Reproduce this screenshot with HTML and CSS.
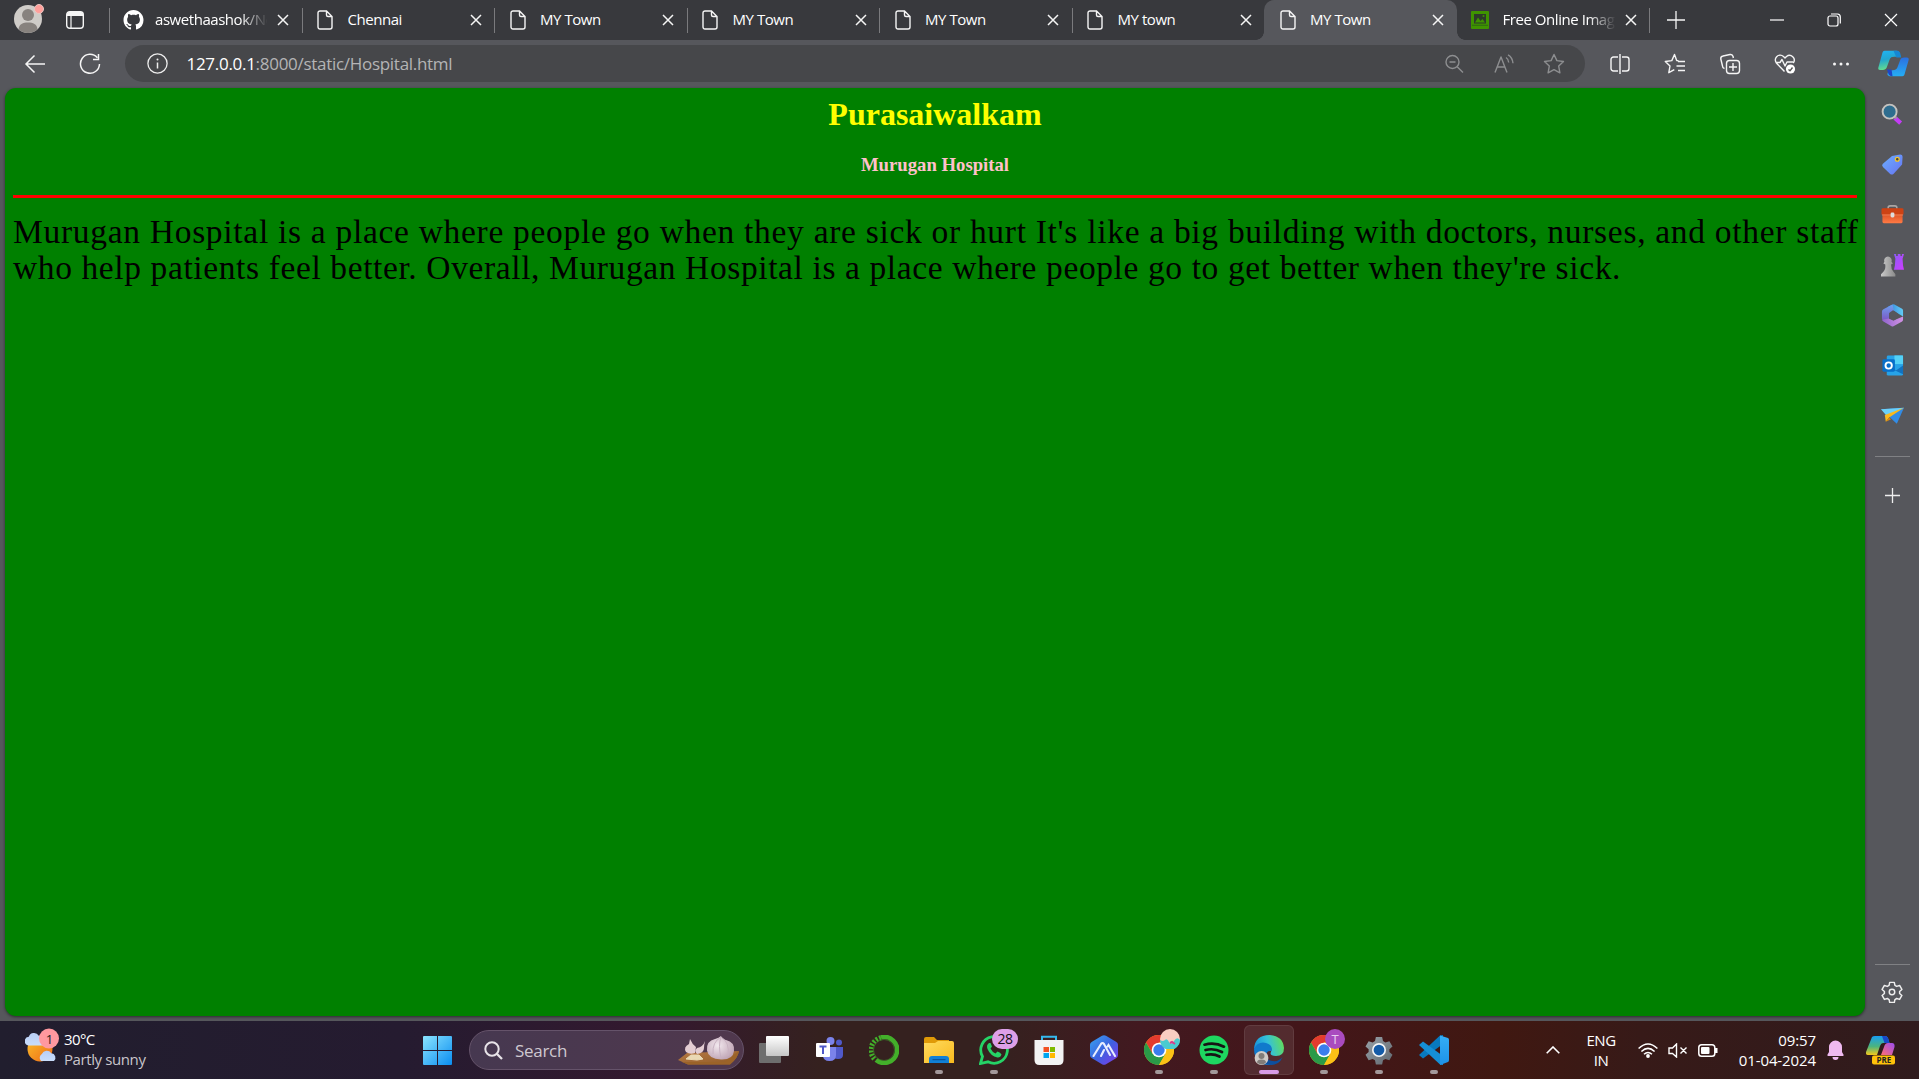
FILE: index.html
```html
<!DOCTYPE html>
<html lang="en">
<head>
<meta charset="utf-8">
<title>MY Town</title>
<link rel="stylesheet" href="styles.css">
</head>
<body>
<svg class="defs" width="0" height="0" aria-hidden="true">
  <defs>
    <linearGradient id="gWin" x1="0" y1="0" x2="1" y2="1"><stop offset="0" stop-color="#8be4ff"/><stop offset="1" stop-color="#0a8df0"/></linearGradient>
    <linearGradient id="gCop1" x1="0" y1="0" x2="0.2" y2="1"><stop offset="0" stop-color="#1fb4f5"/><stop offset=".5" stop-color="#22a6cf"/><stop offset="1" stop-color="#63dc8f"/></linearGradient>
    <linearGradient id="gCop2" x1="0" y1="0" x2="0" y2="1"><stop offset="0" stop-color="#2c6fe0"/><stop offset="1" stop-color="#25aef5"/></linearGradient>
    <linearGradient id="gPre1" x1="0" y1="0" x2="0" y2="1"><stop offset="0" stop-color="#189ef2"/><stop offset=".55" stop-color="#4bb47e"/><stop offset="1" stop-color="#f4c81c"/></linearGradient>
    <linearGradient id="gPre2" x1="1" y1="0" x2="0" y2="1"><stop offset="0" stop-color="#9b4cf0"/><stop offset="1" stop-color="#ff6f74"/></linearGradient>
    <linearGradient id="gTag" x1="0" y1="0" x2="1" y2="1"><stop offset="0" stop-color="#6cb1ff"/><stop offset="1" stop-color="#6672f2"/></linearGradient>
    <linearGradient id="gBox" x1="0" y1="0" x2="0" y2="1"><stop offset="0" stop-color="#c83b12"/><stop offset="1" stop-color="#ff7a45"/></linearGradient>
    <linearGradient id="gPawn" x1="0" y1="0" x2="1" y2="0"><stop offset="0" stop-color="#c9c9c9"/><stop offset="1" stop-color="#8b8b8b"/></linearGradient>
    <linearGradient id="gRook" x1="0" y1="0" x2="1" y2="1"><stop offset="0" stop-color="#8a5cf6"/><stop offset="1" stop-color="#d03cff"/></linearGradient>
    <linearGradient id="gFold" x1="0" y1="0" x2="1" y2="1"><stop offset="0" stop-color="#ffdb5e"/><stop offset="1" stop-color="#f9b91e"/></linearGradient>
    <linearGradient id="gArc" x1="0" y1="0" x2="1" y2="1"><stop offset="0" stop-color="#38a5f0"/><stop offset=".5" stop-color="#3d62e0"/><stop offset="1" stop-color="#8238e8"/></linearGradient>
    <linearGradient id="gEdge" x1="0" y1=".6" x2="1" y2=".4"><stop offset="0" stop-color="#1690dc"/><stop offset=".5" stop-color="#35c1d8"/><stop offset="1" stop-color="#63dd5a"/></linearGradient>
    <linearGradient id="gSun" x1="0" y1="0" x2="1" y2="1"><stop offset="0" stop-color="#fbc02a"/><stop offset="1" stop-color="#ee6a16"/></linearGradient>
    <linearGradient id="gCloud" x1="0" y1="0" x2="0" y2="1"><stop offset="0" stop-color="#b8cef5"/><stop offset="1" stop-color="#c9ddfb"/></linearGradient>
    <linearGradient id="gGear" x1="0" y1="0" x2="1" y2="1"><stop offset="0" stop-color="#9aa3aa"/><stop offset="1" stop-color="#5f676e"/></linearGradient>
    <radialGradient id="gBulb" cx=".4" cy=".4" r=".7"><stop offset="0" stop-color="#f2e8ee"/><stop offset="1" stop-color="#bb9fb0"/></radialGradient>
    <linearGradient id="gBoard" x1="0" y1="0" x2="1" y2="1"><stop offset="0" stop-color="#b87b46"/><stop offset="1" stop-color="#8f5a24"/></linearGradient>
    <linearGradient id="gPane" x1="0" y1="0" x2="0" y2="1"><stop offset="0" stop-color="#ffffff"/><stop offset="1" stop-color="#c6c6c6"/></linearGradient>
    <linearGradient id="gVs" x1="0" y1="0" x2="0" y2="1"><stop offset="0" stop-color="#35adf5"/><stop offset="1" stop-color="#1d92e8"/></linearGradient>
    <linearGradient id="gM1" x1="0" y1="0" x2="1" y2="0"><stop offset="0" stop-color="#2f7fd8"/><stop offset="1" stop-color="#62cdf6"/></linearGradient>
    <linearGradient id="gM2" x1="0" y1="0" x2="0" y2="1"><stop offset="0" stop-color="#6da1ef"/><stop offset="1" stop-color="#7d4fc0"/></linearGradient>
    <linearGradient id="gM3" x1="0" y1="0" x2="1" y2="0"><stop offset="0" stop-color="#8e63cc"/><stop offset="1" stop-color="#d292e4"/></linearGradient>

    <symbol id="file" viewBox="0 0 16 20"><path d="M3 1h6.500L15 6.500V17a2 2 0 0 1-2 2H3a2 2 0 0 1-2-2V3a2 2 0 0 1 2-2zM9.500 1v4a1.500 1.500 0 0 0 1.500 1.500h4" fill="none" stroke="#f5f5f5" stroke-width="1.400"/></symbol>
    <symbol id="close" viewBox="0 0 12 12"><path d="M1 1l10 10M11 1L1 11" fill="none" stroke="#f5f5f5" stroke-width="1.500"/></symbol>
    <symbol id="chrome" viewBox="0 0 30 30">
      <circle cx="15" cy="15" r="15" fill="#fbc116"/>
      <path d="M2 7.500A15 15 0 0 1 28 7.500H15L8.500 18.700z" fill="#e33b2e"/>
      <path d="M2 7.500A15 15 0 0 0 15 30L21.500 18.750H8.500z" fill="#2a9a48"/>
      <path d="M28 7.500H15v7.500l6.500 3.750L15 30A15 15 0 0 0 28 7.500z" fill="#fbc116"/>
      <circle cx="15" cy="15" r="7.300" fill="#fff"/><circle cx="15" cy="15" r="5.700" fill="#3b7ded"/>
    </symbol>
    <symbol id="cog" viewBox="0 0 24 24"><path d="M9.500 1.500h5l.7 3.300 1.900 1.100 3.200-1 2.500 4.300-2.500 2.200v2.200l2.500 2.200-2.500 4.300-3.200-1-1.900 1.100-.7 3.300h-5l-.7-3.300-1.900-1.100-3.200 1-2.500-4.300 2.500-2.200v-2.200L1.200 9.200l2.500-4.300 3.200 1 1.900-1.100z"/></symbol>
  </defs>
</svg>

<header class="tabstrip">
  <div class="profile">
    <svg width="30" height="30" viewBox="0 0 30 30"><circle cx="14" cy="15" r="14" fill="#cfccc8"/><circle cx="14" cy="11" r="6" fill="#87827e"/><path d="M4.500 25.300C5 20 9 18.500 14 18.500s9 1.500 9.500 6.800A14 14 0 0 1 4.500 25.300z" fill="#87827e"/><circle cx="25" cy="5" r="4.500" fill="#ff9f9b" stroke="#e8c8c4" stroke-width="1"/></svg>
    <svg width="18" height="18" viewBox="0 0 18 18"><rect x=".7" y=".7" width="16.600" height="16.600" rx="3" fill="none" stroke="#f5f5f5" stroke-width="1.400"/><path d="M1 5V3a2 2 0 0 1 2-2h12a2 2 0 0 1 2 2v2z" fill="#f5f5f5"/><path d="M5 5v12" stroke="#f5f5f5" stroke-width="1.200"/></svg>
  </div>
  <div class="tab sep">
    <svg class="github" width="21" height="20" viewBox="0 0 16 16"><path fill="#fff" d="M8 0C3.580 0 0 3.580 0 8c0 3.540 2.290 6.530 5.470 7.590.4.070.55-.17.55-.38 0-.19-.01-.82-.01-1.490-2.010.37-2.530-.49-2.690-.94-.09-.23-.48-.94-.82-1.130-.28-.15-.68-.52-.01-.53.63-.01 1.080.58 1.230.82.72 1.210 1.870.87 2.330.66.07-.52.28-.87.51-1.070-1.780-.2-3.640-.89-3.640-3.950 0-.87.31-1.590.82-2.150-.08-.2-.36-1.020.08-2.120 0 0 .67-.21 2.200.82.64-.18 1.320-.27 2-.27s1.360.09 2 .27c1.530-1.040 2.200-.82 2.200-.82.44 1.100.16 1.920.08 2.120.51.56.82 1.270.82 2.150 0 3.070-1.870 3.750-3.650 3.950.29.25.54.73.54 1.480 0 1.070-.01 1.930-.01 2.200 0 .21.150.46.550.38A8.010 8.010 0 0 0 16 8c0-4.420-3.580-8-8-8z"/></svg>
    <span class="label fade">aswethaashok/Ne</span><svg class="x"><use href="#close"/></svg></div>
  <div class="tab sep"><svg class="file"><use href="#file"/></svg><span class="label">Chennai</span><svg class="x"><use href="#close"/></svg></div>
  <div class="tab sep"><svg class="file"><use href="#file"/></svg><span class="label">MY Town</span><svg class="x"><use href="#close"/></svg></div>
  <div class="tab sep"><svg class="file"><use href="#file"/></svg><span class="label">MY Town</span><svg class="x"><use href="#close"/></svg></div>
  <div class="tab sep"><svg class="file"><use href="#file"/></svg><span class="label">MY Town</span><svg class="x"><use href="#close"/></svg></div>
  <div class="tab sep"><svg class="file"><use href="#file"/></svg><span class="label">MY town</span><svg class="x"><use href="#close"/></svg></div>
  <div class="tab active"><svg class="file"><use href="#file"/></svg><span class="label">MY Town</span><svg class="x"><use href="#close"/></svg></div>
  <div class="tab">
    <svg class="file pic" viewBox="0 0 18 18"><rect width="18" height="18" rx="1" fill="#3f9400"/><path d="M3 3h12v9.500H3z" fill="#2d3b2a"/><path d="M4 11.500l3-5 2.500 3.500 2-2 2.500 3.500z" fill="#3f9400"/><circle cx="12.500" cy="5" r="1" fill="#3f9400"/><path d="M1 14.300h16" stroke="#2d5f15" stroke-width=".8"/></svg>
    <span class="label fade">Free Online Image</span><svg class="x"><use href="#close"/></svg></div>
  <div class="newtab"><svg width="18" height="18" viewBox="0 0 18 18"><path d="M9 0v18M0 9h18" stroke="#f5f5f5" stroke-width="1.300"/></svg></div>
  <div class="winctl">
    <svg viewBox="0 0 14 14"><path d="M0 7h14" stroke="#fff" stroke-width="1.200"/></svg>
    <svg viewBox="0 0 14 14"><rect x="1" y="3" width="10" height="10" rx="2" fill="none" stroke="#fff" stroke-width="1.200"/><path d="M4 1h6.500A3 3 0 0 1 13.300 4v6.500" fill="none" stroke="#fff" stroke-width="1.200"/></svg>
    <svg viewBox="0 0 14 14"><path d="M1 1l12 12M13 1L1 13" stroke="#fff" stroke-width="1.200"/></svg>
  </div>
</header>

<nav class="toolbar">
  <div class="navbtns">
    <svg width="22" height="20" viewBox="0 0 22 20"><path d="M21 10H2M10.500 1.500L2 10l8.500 8.500" fill="none" stroke="#f5f5f5" stroke-width="1.500"/></svg>
    <svg width="22" height="22" viewBox="0 0 22 22"><path d="M18.300 4.700A9.500 9.500 0 1 0 20.500 11M19.500 1v5.500H14" fill="none" stroke="#f5f5f5" stroke-width="1.500"/></svg>
  </div>
  <div class="address">
    <svg width="21" height="21" viewBox="0 0 21 21"><circle cx="10.500" cy="10.500" r="9.600" fill="none" stroke="#eee" stroke-width="1.300"/><path d="M10.500 9.500v6" stroke="#eee" stroke-width="1.500"/><circle cx="10.500" cy="6.500" r="1" fill="#eee"/></svg>
    <div class="url"><b>127.0.0.1</b>:8000/static/Hospital.html</div>
    <div class="addricons">
      <svg viewBox="0 0 20 20"><circle cx="8.500" cy="8" r="6.500"/><path d="M13.200 12.700l5.800 5.800M5.500 8h6"/></svg>
      <svg viewBox="0 0 20 20"><path d="M1 18.500L7 3l6 15.500M3 13h8M12 3.500q2.500 1.500 2.700 5M14 .8q4.500 2.500 5 8.500"/></svg>
      <svg viewBox="0 0 20 20"><path d="M10 .5l2.900 6.100 6.600.9-4.800 4.600 1.200 6.700L10 15.600l-5.900 3.200 1.200-6.700L.5 7.500l6.600-.9z"/></svg>
    </div>
  </div>
  <div class="tools">
    <svg viewBox="0 0 20 20"><path d="M8 3H3.500A2.500 2.500 0 0 0 1 5.500v9A2.500 2.500 0 0 0 3.500 17H8M12 3h4.500A2.500 2.500 0 0 1 19 5.500v9a2.500 2.500 0 0 1-2.500 2.500H12M10 0v20"/></svg>
    <svg viewBox="0 0 20 20"><path d="M13.500 6.800L11.700 6.600 9.500 .5 6.800 6.600 .3 7.500l4.700 4.500-1.200 6.700 5.500-3.100M13 7.500h7M11.500 12H20M13 16.500h7"/></svg>
    <svg viewBox="0 0 20 20"><rect x="6.500" y="6.500" width="13" height="13" rx="3"/><path d="M13 9v8M9 13h8M4.500 14.500A2.500 2.500 0 0 1 2.500 12L.8 5A2.700 2.700 0 0 1 3 2l7-1.500a2.500 2.500 0 0 1 3 2l.4 1.500"/></svg>
    <svg viewBox="0 0 20 20"><path d="M9.500 17.500L1.800 9.500a4.700 4.700 0 0 1 6.700-7L10 4l1.500-1.500a4.700 4.700 0 0 1 6.700 6.500M.5 8.500H5l2-3 3 6.500 2-4h6"/><circle cx="15.500" cy="15" r="4.600" fill="#fff" stroke="none"/><path d="M13.500 15.500l1.500 1.300 2.500-3.300" stroke="#555"/></svg>
    <svg viewBox="0 0 20 20"><g fill="#f5f5f5" stroke="none"><circle cx="3.500" cy="10" r="1.500"/><circle cx="10" cy="10" r="1.500"/><circle cx="16.500" cy="10" r="1.500"/></g></svg>
  </div>
  <svg class="copilot" viewBox="0 0 32 40" preserveAspectRatio="none"><path d="M7 1h11c3 0 5 2 4 5l-1 4h-4c-3 0-4 1-5 4l-3 12c-.7 2.500-2 3.500-4 3.500H3c-3 0-3-2-2.500-4.500L4 7c.7-4 1-6 3-6z" fill="url(#gCop1)"/><path d="M16 1h3c4 0 4 4 5 10h-5z" fill="#1686d4"/><path d="M25 39H14c-3 0-5-2-4-5l1-4h4c3 0 4-1 5-4l3-11.500c.7-2.500 2-3.500 4-3.500h2c3 0 3 2 2.500 4.500L28 33c-.7 4-1 6-3 6z" fill="url(#gCop2)"/><path d="M9 29h5l1 10c-5 0-4-6-6-10z" fill="#1f45c8"/></svg>
</nav>

<div class="workspace">
  <main class="page">
    <h1>Purasaiwalkam</h1>
    <h3>Murugan Hospital</h3>
    <hr>
    <p><span class="l1">Murugan Hospital is a place where people go when they are sick or hurt It's like a big building with doctors, nurses, and other staff</span><br><span class="l2">who help patients feel better. Overall, Murugan Hospital is a place where people go to get better when they're sick.</span></p>
  </main>
  <aside class="sidebar">
    <div class="apps">
      <svg viewBox="0 0 24 24"><path d="M14.500 15.500l6 5.500" stroke="#c33cf5" stroke-width="4.500"/><path d="M13 13l3 3" stroke="#999" stroke-width="2.500"/><circle cx="9" cy="9" r="7.300" fill="#2f6d8f" stroke="#c4c2bf" stroke-width="2"/></svg>
      <svg viewBox="0 0 24 24"><path d="M11.500 3L20 1.500q2.500 0 2.500 2.500L22 12l-9 9.800q-1.700 1.500-3.400 0L2 14.500q-1.700-1.700 0-3.300z" fill="url(#gTag)"/><circle cx="17" cy="6.500" r="2" fill="#444" stroke="#f5c62c" stroke-width="1.300"/></svg>
      <svg viewBox="0 0 24 24"><path d="M7.500 7V5q0-2 2-2h5q2 0 2 2v2" fill="none" stroke="#aaa5a3" stroke-width="1.700"/><rect x="1.500" y="6" width="21" height="15" rx="1.500" fill="url(#gBox)"/><path d="M.5 7q0-1.500 1.500-1.500h20q1.500 0 1.500 1.500v5H.5z" fill="#cd4214"/><path d="M1 12.500h22" stroke="#f17e52"/><rect x="10" y="10" width="4" height="5" rx="1.500" fill="#ddd"/></svg>
      <svg viewBox="0 0 24 24"><path d="M13.500 0h2.300v2h1.700V0h2.800v2h1.500V0H24l-1.500 5 .5 7 1 4.500H13.500l1-4.500.5-7z" fill="url(#gRook)"/><path d="M3.500 8a4 4 0 1 1 7.500 0l1.500 2-2 1q0 5 2.500 7.500l2 2.500v2.500H0V21l2.500-2.500Q5 16 4.500 11l-2-1z" fill="url(#gPawn)"/></svg>
      <svg viewBox="0 0 24 24"><path d="M7 2.800L12 .5q1-.4 2 .1L22 5q1 .6 1 2v6l-6-3.500-5-3.500z" fill="url(#gM1)"/><path d="M12 .5L2.500 5.500Q1 6.400 1 8v8l5 3 2.500-2.500V10l5-3.200Z" fill="url(#gM2)"/><path d="M1 16.500q0 .8 1.500 1.700l8.500 5q1 .6 2 0l9-5q1-.6 1-2V13L13.500 17 8 15z" fill="url(#gM3)"/><path d="M8.500 9.500l4-3L17.500 10v4.500L13 17.500l-4.500-2.300z" fill="#56575c"/></svg>
      <svg viewBox="0 0 24 24"><rect x="6" y="1.500" width="17" height="21" rx="1.500" fill="#27a3e8"/><path d="M14 1.500h9v9h-9z" fill="#53d1f7"/><path d="M6 13l17 8V12l-7 5z" fill="#1272c0"/><rect x="1.500" y="5.500" width="13" height="13" rx="1.500" fill="#086fc9"/><circle cx="8" cy="12" r="3.300" fill="none" stroke="#fff" stroke-width="2"/></svg>
      <svg viewBox="0 0 24 24"><path d="M0 5.500L24 4 16.500 20.500z" fill="#328ce6"/><path d="M0 5.500L24 4 6 12.500z" fill="#6bd0f9"/><path d="M24 4L4 11.500 5 18.500l3.500-4.500z" fill="#fbb91c"/><path d="M5 18.500l3.500-4.500 2 2z" fill="#df8a0c"/></svg>
    </div>
    <i class="rule"></i>
    <svg class="plus" viewBox="0 0 15 15"><path d="M7.500 0v15M0 7.500h15" stroke="#eee" stroke-width="1.300"/></svg>
    <i class="rule bottom"></i>
    <svg class="gear" viewBox="0 0 24 24"><g fill="none" stroke="#eee" stroke-width="1.600" stroke-linejoin="round"><use href="#cog"/><circle cx="12" cy="12" r="3"/></g></svg>
  </aside>
</div>

<footer class="taskbar">
  <div class="weather">
    <svg width="35" height="36" viewBox="0 0 35 36"><circle cx="15" cy="21" r="12.500" fill="url(#gSun)"/><path d="M3 17.500a4.500 4.500 0 0 1 .8-8.800 5.500 5.500 0 0 1 10-1 4.500 4.500 0 0 1 4.200 9.800z" fill="url(#gCloud)"/><path d="M16 33a4.500 4.500 0 0 1 .8-7 5.500 5.500 0 0 1 9.500-.8A4.500 4.500 0 0 1 29 33z" fill="url(#gCloud)"/><circle cx="24" cy="10.500" r="10" fill="#ff989f"/><text x="24.500" y="15.500" text-anchor="middle" class="one">1</text></svg>
    <div class="report"><div class="temp">30°C</div><div class="cond">Partly sunny</div></div>
  </div>
  <svg class="start" viewBox="0 0 29 29"><path d="M1 0h13v14H0V1a1 1 0 0 1 1-1zM15 0h13a1 1 0 0 1 1 1v13H15zM0 15h14v14H1a1 1 0 0 1-1-1zM15 15h14v13a1 1 0 0 1-1 1H15z" fill="url(#gWin)"/></svg>
  <div class="search">
    <svg width="19" height="19" viewBox="0 0 19 19"><circle cx="8" cy="8" r="6.700" fill="none" stroke="#e8e3e8" stroke-width="2"/><path d="M12.800 12.800l5.200 5.200" stroke="#e8e3e8" stroke-width="2.300"/></svg>
    <span>Search</span>
    <svg class="garlic" width="62" height="31" viewBox="0 0 62 31"><path d="M0 25l9-7 52-2q-1 7-9 13.500H10z" fill="url(#gBoard)"/><path d="M61 16q-1 7-9 13.500H10L4 27h42z" fill="#9b6328"/><path d="M43 1q1 3 5 4 9 2 8 11-1 9-13 8.500-12.500-.5-14-9Q28 6 37 4q4-1 6-3z" fill="url(#gBulb)"/><path d="M43 2Q34 7 35 19M43 2q-3 8 0 22M43 2q9 5 7 19" fill="none" stroke="#c9b2c2"/><path d="M12 4q2 5 6 8l-1 6q-5 2-9-1-3-5 3-8zM27 6q-1 4-1 7 0 5-7 6-3-3 0-6 6-1 8-7z" fill="#e3cdd2"/><path d="M8 24l5-4 8 0 4 4-6 1z" fill="#ead9b4" stroke="#ead9b4"/></svg>
  </div>
  <div class="tasks">
    <div class="task"><svg viewBox="0 0 30 30"><rect y="8" width="22" height="20" rx="1" fill="#6e6e6e"/><rect x="7" y="1" width="23" height="20" rx="1" fill="url(#gPane)"/></svg></div>
    <div class="task"><svg viewBox="0 0 30 30"><circle cx="16.500" cy="6" r="4" fill="#7b83eb"/><circle cx="25" cy="7.500" r="3" fill="#5059c9"/><path d="M19 12h10v8q0 4-5 4t-5-4z" fill="#5059c9"/><path d="M9 12h13v8q0 6-6.500 6T9 20z" fill="#7b83eb"/><rect x="2" y="8" width="14" height="14" rx="1" fill="#fff"/><path d="M5.500 11.500h7M9 11.500V19" stroke="#5059c9" stroke-width="2"/></svg></div>
    <div class="task"><svg viewBox="0 0 30 30"><path d="M12 2.300A13 13 0 1 1 7 25" fill="none" stroke="#43b02a" stroke-width="4.500"/><path d="M12 2.700A12.700 12.700 0 0 0 6 24.500" fill="none" stroke="#43b02a" stroke-width="5" stroke-dasharray="2 1.500"/><circle cx="15" cy="15" r="10.500" fill="none" stroke="#3e7b2c" stroke-width=".7"/></svg></div>
    <div class="task run"><svg viewBox="0 0 30 30"><path d="M0 4q0-2 2-2h8l3 3h12v5H0z" fill="#e09a07"/><path d="M0 8h11l3-2h14q2 0 2 2v20H0z" fill="url(#gFold)"/><path d="M5 28v-4q0-3 3-3h14q3 0 3 3v4z" fill="#1180d6"/><path d="M8.500 24.700h13" stroke="#0a4a8f"/></svg></div>
    <div class="task run"><svg viewBox="0 0 30 30"><path d="M1.500 28.500l2-7A13.300 13.300 0 1 1 9 26.800z" fill="none" stroke="#25d366" stroke-width="2.800"/><path d="M10 8q-3 2-1.500 6 3 7 10 8.500 3 .3 4-3-1-2-4-3l-2 2q-3-1-5-5l1.500-2-1.500-3.500z" fill="#25d366"/></svg><span class="badge">28</span></div>
    <div class="task"><svg viewBox="0 0 30 30"><path d="M8 6V1.800h14V6" fill="none" stroke="#35b9ee" stroke-width="2"/><path d="M.5 5h29v20q0 5-5 5h-19q-5 0-5-5z" fill="#f3f3f3"/><path d="M9.500 12H15v5H9.500z" fill="#f25022"/><path d="M16 12h5v5h-5z" fill="#7fba00"/><path d="M9.500 18H15v5H9.500z" fill="#00a4ef"/><path d="M16 18h5v5h-5z" fill="#ffb900"/></svg></div>
    <div class="task"><svg viewBox="0 0 30 30"><path d="M13 .7q2-1 4 0l10 6q2 1 2 3v10.500q0 2-2 3l-10 6q-2 1-4 0l-10-6q-2-1-2-3V9.700q0-2 2-3z" fill="url(#gArc)"/><path d="M4.500 21L12 9q1.500-2 3 0l6 11M12 21l3-6M18.500 11.500l1-1.500 6.500 11" fill="none" stroke="#e8edff" stroke-width="2.100" stroke-linecap="round"/></svg></div>
    <div class="task run"><svg><use href="#chrome"/></svg><svg class="avatar" viewBox="0 0 20 20"><circle cx="10" cy="10" r="10" fill="#f8cdc2"/><path d="M0 11q3 2 5 0t4 2 5-1 6-1A10 10 0 0 1 0 11z" fill="#4bcbd0"/><path d="M10 14l2-1 3 2" stroke="#d63c8d" stroke-width="2" fill="none"/></svg></div>
    <div class="task run"><svg viewBox="0 0 30 30"><circle cx="15" cy="15" r="14.500" fill="#1ed760"/><path d="M5.500 9.700q10-3 19.500 2M6.500 15q8.500-2.200 16.500 2M7.500 19.800q7-1.600 13 1.700" fill="none" stroke="#161414" stroke-width="2.700" stroke-linecap="round"/></svg></div>
    <div class="task run current"><svg viewBox="0 0 30 30"><path d="M0 14Q1 0 15.500 0 29 1 30 13q0 8-8 8-7 0-5-4 2-7-5-7Q4 10 0 14z" fill="url(#gEdge)"/><path d="M0 14q4-8 12-6 7 2 5.500 8-6-1-5 6 3 8 8 7.500-20 3-20.500-15.500z" fill="#1179cc"/><path d="M12.500 17q-2 8 6 9 6 1 10-4-3 8-12 8Q5 29 12.500 17z" fill="#0d4f9e"/><circle cx="7.500" cy="23" r="6.900" fill="#cfccc8"/><circle cx="7.500" cy="21" r="3" fill="#817d79"/><path d="M3 27.500q0-3 4.500-3t4.500 3q-4 4-9 0z" fill="#817d79"/></svg></div>
    <div class="task run"><svg><use href="#chrome"/></svg><span class="avatar letter">T</span></div>
    <div class="task run"><svg viewBox="0 0 24 24"><use href="#cog" fill="url(#gGear)"/><circle cx="12" cy="12" r="5.600" fill="#f3f5f7"/><circle cx="12" cy="12" r="4.300" fill="#135ba8"/></svg></div>
    <div class="task run"><svg viewBox="0 0 30 30"><path d="M21 .5L24 0v9L4 23.500 0 20z" fill="#0879bf"/><path d="M0 10l4-3.500L24 21v9l-3-.5z" fill="#158fd6"/><path d="M21 .5L29 3q1 .5 1 2v20q0 1.500-1 2l-8 3z" fill="url(#gVs)"/></svg></div>
  </div>
  <div class="tray">
    <svg class="chev" width="14" height="8" viewBox="0 0 14 8"><path d="M.7 7.300L7 1l6.300 6.300" fill="none" stroke="#fff" stroke-width="1.600"/></svg>
    <div class="lang">ENG<br>IN</div>
    <svg class="wifi" width="20" height="15" viewBox="0 0 20 15"><g fill="none" stroke="#fff" stroke-width="1.500"><path d="M.6 5.500Q10-3.500 19.400 5.500M3.400 8.500q6.600-6.300 13.200 0M6 11.300q4-3.600 8 0"/></g><circle cx="10" cy="13" r="1.900" fill="#fff"/></svg>
    <svg class="mute" width="20" height="15" viewBox="0 0 20 15"><path d="M1 5h3.500L8.500 1v13l-4-3.500H1zM12.500 4.500l6 6M18.500 4.500l-6 6" fill="none" stroke="#fff" stroke-width="1.400"/></svg>
    <svg class="bat" width="20" height="13" viewBox="0 0 20 13"><rect x=".8" y=".8" width="16" height="11.400" rx="2.800" fill="none" stroke="#fff" stroke-width="1.500"/><rect x="3" y="3" width="8.500" height="7" rx="1" fill="#fff"/><path d="M17 4h2.500v5H17z" fill="#fff"/></svg>
    <div class="clock">09:57<br>01-04-2024</div>
    <svg class="bell" width="17" height="20" viewBox="0 0 17 20"><path d="M8.500.5A6.500 6.500 0 0 1 15 7v5l1.700 3q0 1-1 1H1.300q-1 0-1-1L2 12V7A6.500 6.500 0 0 1 8.500.5zM5.500 17h6a3 3 0 0 1-6 0z" fill="#efb9f0"/></svg>
    <svg class="pre" width="29" height="29" viewBox="0 0 29 29"><path d="M6 1q1-1 3-1h10q2 0 3 2l1.500 5H17q-2 0-3 3l-3 9H2q-2.500 0-2-3z" fill="url(#gPre1)"/><path d="M16 0h3q2 0 3 2l1.500 5h-5z" fill="#1848c8"/><path d="M18 11q1-4 4-4h4q3 0 2.500 4L26 19H15z" fill="url(#gPre2)"/><rect x="6" y="19.500" width="23" height="9" rx="2" fill="#ffc20a"/><text x="17.800" y="27" text-anchor="middle" class="pretext">PRE</text></svg>
  </div>
</footer>
</body>
</html>
```
FILE: styles.css
```css
* { box-sizing: border-box; }
html, body { height: 100%; }
body {
  margin: 0;
  display: flex;
  flex-direction: column;
  overflow: hidden;
  background: #56575c;
  font-family: "Open Sans", "Noto Sans", sans-serif;
  color: #fff;
}
svg { display: block; flex: none; }
.defs { position: absolute; }

/* Tab strip */
.tabstrip { height: 40px; flex: none; display: flex; background: #38393d; }
.profile { width: 109px; flex: none; display: flex; align-items: center; gap: 22px; padding-left: 14px; }
.profile svg:first-child { margin-bottom: 2px; }
.tab {
  width: 192.500px;
  flex: none;
  display: flex;
  align-items: center;
  padding-left: 15.500px;
  font-size: 15px;
  letter-spacing: -0.450px;
  background: linear-gradient(#7a7a7d, #7a7a7d) no-repeat 0 8px / 0 25px;
}
.tab.sep { background-size: 1px 25px; }
.file { width: 16px; height: 20px; margin-right: 14.500px; }
.github { margin: 0 11.500px 0 -2px; }
.pic { width: 18px; height: 18px; margin: 0 13.500px 0 -1px; }
.label { width: 112px; flex: none; white-space: nowrap; overflow: hidden; line-height: 22px; margin-bottom: 3px; }
.fade { -webkit-mask-image: linear-gradient(90deg, #000 85px, transparent 113px); mask-image: linear-gradient(90deg, #000 85px, transparent 113px); }
.x { width: 12px; height: 12px; margin-left: 10px; }
.active {
  position: relative;
  background: #56575c;
  border-radius: 10px 10px 0 0;
}
.active::before, .active::after {
  content: "";
  position: absolute;
  bottom: 0;
  width: 8px;
  height: 8px;
}
.active::before { left: -8px; background: radial-gradient(circle at 0 0, transparent 7.500px, #56575c 8px); }
.active::after { right: -8px; background: radial-gradient(circle at 100% 0, transparent 7.500px, #56575c 8px); }
.newtab { width: 54px; display: flex; align-items: center; justify-content: center; background: linear-gradient(#7a7a7d, #7a7a7d) no-repeat 0 8px / 1px 25px; }
.winctl { margin-left: auto; display: flex; align-items: center; gap: 43px; padding-right: 21px; padding-bottom: 1px; }
.winctl svg { width: 14px; height: 14px; }

/* Toolbar */
.toolbar { height: 48px; flex: none; display: flex; align-items: center; padding-bottom: 1px; }
.navbtns { width: 125px; display: flex; gap: 33px; padding-left: 24px; align-items: center; }
.address { width: 1460px; height: 37px; flex: none; display: flex; align-items: center; padding: 0 21.500px 0 22px; border-radius: 19px; background: #46474a; }
.url { margin-left: 18.500px; font-size: 17px; letter-spacing: -0.290px; color: #b4b4b5; white-space: nowrap; line-height: 24px; }
.url b { font-weight: 400; color: #fff; }
.addricons { margin-left: auto; display: flex; gap: 30px; }
.addricons svg, .tools svg { width: 20px; height: 20px; fill: none; stroke-width: 1.400px; stroke-linejoin: round; overflow: visible; }
.addricons svg { stroke: #8d8e90; }
.tools { display: flex; gap: 35.300px; margin-left: 24.500px; }
.tools svg { stroke: #f5f5f5; }
.copilot { width: 31px; height: 27px; margin-left: 27px; }

/* Page area and sidebar */
.workspace { flex: 1; display: flex; padding: 0 0 5px 5px; min-height: 0; }
.page {
  width: 1860px;
  flex: none;
  padding: 8px;
  border-radius: 11px;
  background: #008000;
  box-shadow: 0 1px 3px rgba(0, 0, 0, .5);
  font-family: "Liberation Serif", serif;
  color: #000;
}
.page h1, .page h3 { margin: 0; text-align: center; font-weight: 700; }
.page h1 { font-size: 32px; line-height: 37px; color: #ff0; }
.page h3 { font-size: 18.720px; line-height: 21px; margin-top: 21px; color: #ffc0cb; }
.page hr { height: 3px; margin: 20px 0 0; border: 0; background: #f00; }
.page p { margin: 16px 0 0; font-size: 33.500px; line-height: 36px; white-space: nowrap; }
.l1 { letter-spacing: 0.700px; }
.l2 { letter-spacing: 0.610px; }

.sidebar { flex: 1; display: flex; flex-direction: column; align-items: center; padding: 15px 0 13px; }
.apps { display: flex; flex-direction: column; gap: 27.200px; }
.apps svg { width: 23px; height: 23px; }
.rule { width: 35px; height: 1px; flex: none; margin-top: 29px; background: #808184; }
.plus { width: 15px; height: 15px; margin-top: 31px; }
.rule.bottom { margin-top: auto; }
.gear { width: 22px; height: 22px; margin-top: 16px; }

/* Taskbar */
.taskbar {
  height: 58px;
  flex: none;
  display: flex;
  align-items: center;
  background: linear-gradient(90deg, #211e2e 0, #251b30 400px, #34192f 660px, #35211f 820px, #35211f 1000px, #421920 1140px, #43161a 1300px, #401811 1500px, #371a18 1640px, #301b1d 1919px);
}
.weather { width: 423px; display: flex; align-items: center; padding-left: 25px; gap: 4px; font-size: 15px; line-height: 20px; }
.weather > svg { margin-bottom: 8px; }
.report { margin-bottom: 2px; }
.temp { letter-spacing: -0.600px; }
.cond { color: #c9c5cb; letter-spacing: -0.400px; }
.one { font-size: 13px; fill: #222; }
.start { width: 29px; height: 29px; margin-right: 17px; }
.search {
  width: 275px;
  height: 40px;
  flex: none;
  display: flex;
  align-items: center;
  padding-left: 14px;
  border-radius: 20px;
  border: 1px solid #65536a;
  background: linear-gradient(90deg, #463850, #50384d);
  font-size: 17px;
  color: #cfc8d0;
}
.search span { margin-left: 12px; letter-spacing: -0.300px; }
.garlic { margin-left: auto; margin-right: 3px; }
.tasks { display: flex; margin-left: 5px; gap: 5px; }
.task { position: relative; width: 50px; height: 50px; flex: none; display: flex; justify-content: center; align-items: center; border-radius: 6px; }
.task > svg { width: 30px; height: 30px; }
.run::after { content: ""; position: absolute; bottom: 1px; left: 21px; width: 8px; height: 4px; border-radius: 2px; background: #a3989a; }
.current { background: rgba(255, 255, 255, .09); border: 1px solid rgba(255, 255, 255, .08); }
.current::after { bottom: 0; left: 14px; width: 20px; background: #d99be6; }
.badge { position: absolute; left: 23px; top: 4px; width: 26px; height: 20px; border-radius: 10px; background: #dda0e8; color: #111; font-size: 14px; line-height: 20px; text-align: center; letter-spacing: -0.500px; }
.task > .avatar { position: absolute; left: 26px; top: 4px; width: 20px; height: 20px; }
.letter { border-radius: 50%; background: #a94bbf; color: #e9cdf0; font-size: 13px; line-height: 20px; text-align: center; }
.tray { display: flex; align-items: center; margin-left: auto; padding-right: 24px; font-size: 15px; line-height: 20px; letter-spacing: -0.450px; }
.lang { width: 40px; margin-left: 21px; margin-bottom: 1px; text-align: center; }
.wifi { margin-left: 17px; }
.mute { margin-left: 10px; }
.bat { margin-left: 10px; }
.clock { width: 90px; margin-left: 8px; margin-bottom: 1px; text-align: right; white-space: nowrap; letter-spacing: -0.100px; }
.bell { margin-left: 11px; }
.pre { margin-left: 22px; }
.pretext { font: 700 8px "Open Sans", sans-serif; letter-spacing: 0; fill: #222; }
```
